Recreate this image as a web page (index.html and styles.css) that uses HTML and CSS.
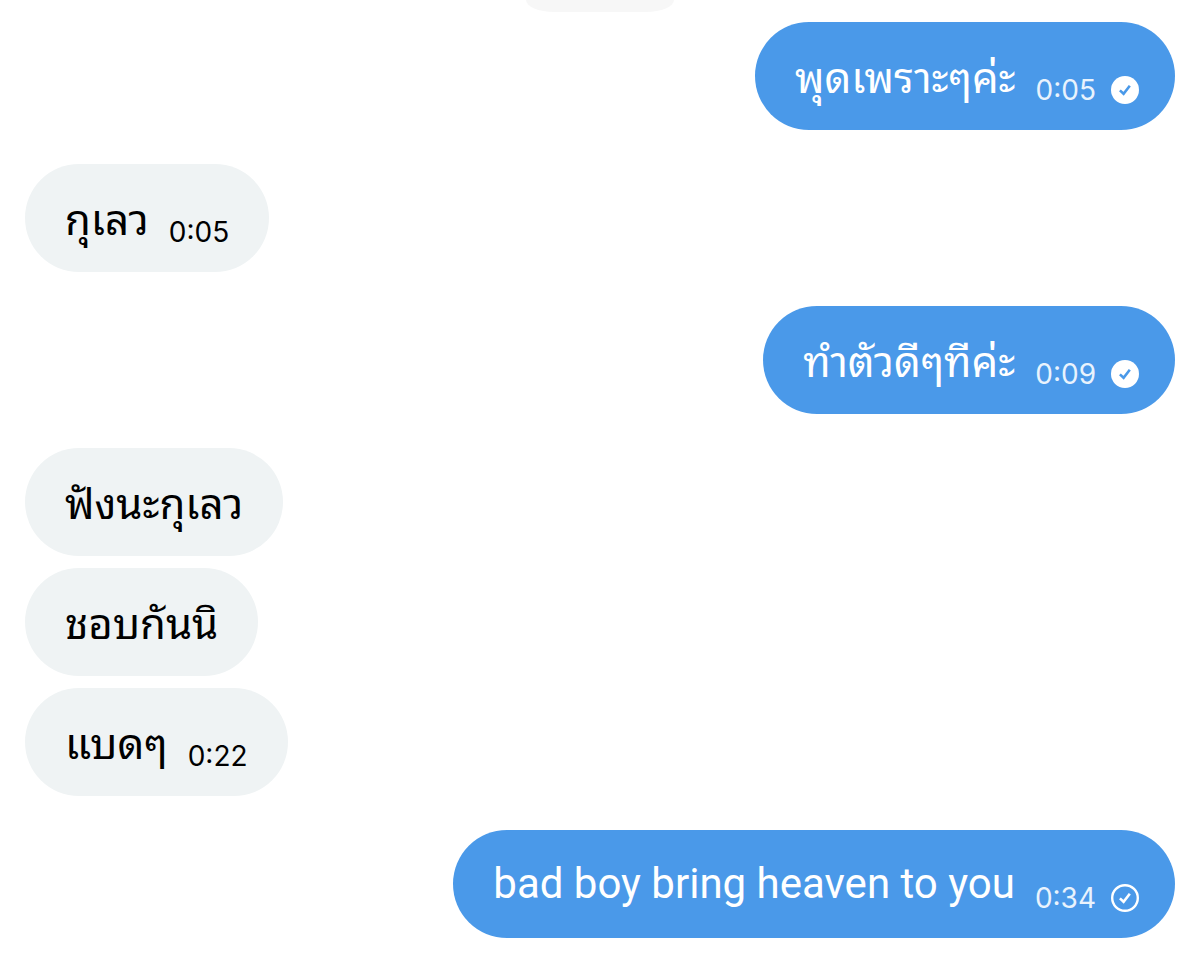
FILE: index.html
```html
<!DOCTYPE html>
<html lang="th">
<head>
  <meta charset="UTF-8" />
  <meta name="viewport" content="width=device-width, initial-scale=1.0" />
  <title>ข้อความ</title>
  <link rel="stylesheet" href="styles.css">
</head>
<body>
  <main class="chat">
    <div class="date-pill"></div>

    <div class="message sent">
      <span class="text">พุดเพราะๆค่ะ</span>
      <time class="time">0:05</time>
      <svg class="status" viewBox="0 0 28 28" aria-hidden="true">
        <circle cx="14" cy="14" r="14" fill="#fff"/>
        <path d="M8.9 14.4l3.7 3.4 6.2-8" fill="none" stroke="#4a99e9" stroke-width="2.6"/>
      </svg>
    </div>

    <div class="message received">
      <span class="text">กุเลว</span>
      <time class="time">0:05</time>
    </div>

    <div class="message sent">
      <span class="text">ทำตัวดีๆทีค่ะ</span>
      <time class="time">0:09</time>
      <svg class="status" viewBox="0 0 28 28" aria-hidden="true">
        <circle cx="14" cy="14" r="14" fill="#fff"/>
        <path d="M8.9 14.4l3.7 3.4 6.2-8" fill="none" stroke="#4a99e9" stroke-width="2.6"/>
      </svg>
    </div>

    <div class="group">
      <div class="message received"><span class="text">ฟังนะกุเลว</span></div>
      <div class="message received"><span class="text">ชอบกันนิ</span></div>
      <div class="message received">
        <span class="text">แบดๆ</span>
        <time class="time">0:22</time>
      </div>
    </div>

    <div class="message sent">
      <span class="text latin">bad boy bring heaven to you</span>
      <time class="time">0:34</time>
      <svg class="status" viewBox="0 0 28 28" aria-hidden="true">
        <circle cx="14" cy="14" r="12.8" fill="none" stroke="#fff" stroke-width="2.4"/>
        <path d="M8.9 14.4l3.7 3.4 6.2-8" fill="none" stroke="#fff" stroke-width="2.6"/>
      </svg>
    </div>
  </main>
</body>
</html>
```
FILE: styles.css
```css
body {
  margin: 0;
  background: #fff;
  color: #000;
  font-family: "Noto Sans Thai Looped", Thonburi, Loma, Garuda, "Liberation Serif", serif;
}

.chat {
  display: flex;
  flex-direction: column;
  gap: 34px;
  padding: 0 25px 37px;
}

.date-pill {
  align-self: center;
  width: 148px;
  height: 12px;
  margin-bottom: -24px;
  border-radius: 0 0 28px 28px / 0 0 12px 12px;
  background: #f7f7f7;
}

.group {
  display: flex;
  flex-direction: column;
  gap: 12px;
}

/* bubbles */
.message {
  display: flex;
  align-items: center;
  box-sizing: border-box;
  min-height: 108px;
  padding: 0 40px;
  border-radius: 54px;
}
.sent {
  align-self: flex-end;
  padding-right: 36px;
  background: #4a99e9;
  color: #fff;
}
.received {
  align-self: flex-start;
  background: #eff3f4;
}

.text {
  padding-bottom: 4px;
  font-size: 42px;
  line-height: 60px;
}
.latin {
  padding-bottom: 0;
  font-family: Roboto, sans-serif;
}

.time {
  margin: 28px 0 0 20px;
  font-family: Inter, sans-serif;
  font-size: 28px;
  line-height: 32px;
}
.sent .time {
  color: #e9f3fd;
}

.status {
  width: 28px;
  height: 28px;
  margin: 28px 0 0 15px;
}
```
